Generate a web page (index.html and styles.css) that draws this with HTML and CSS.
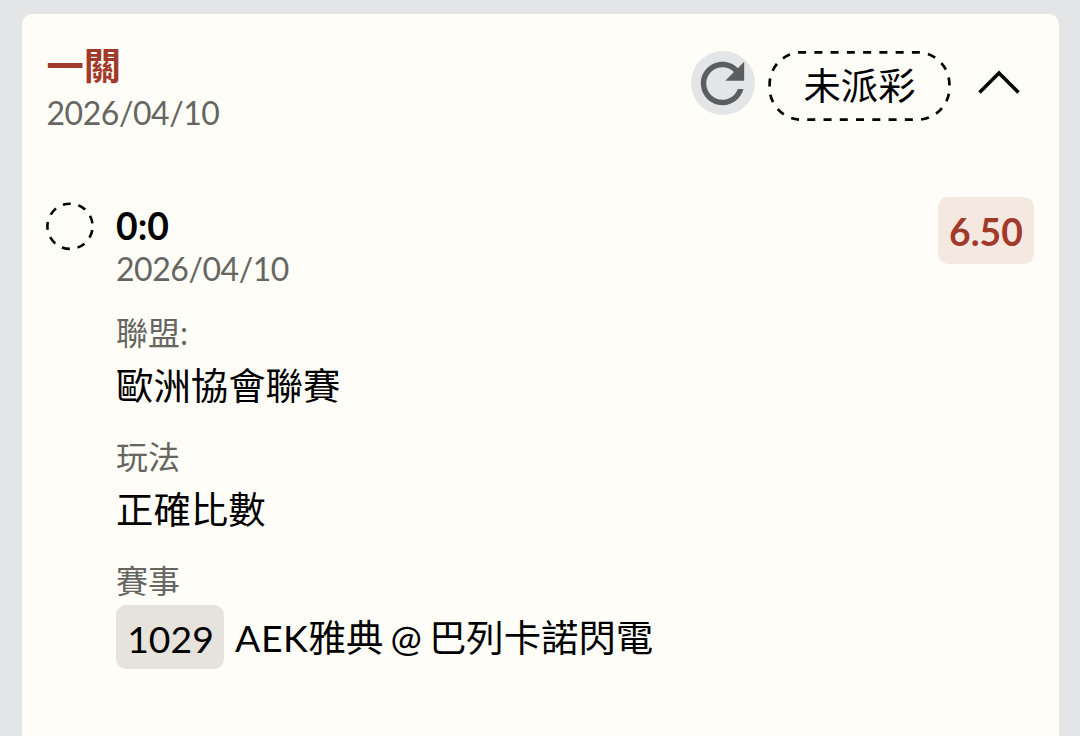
FILE: index.html
```html
<!DOCTYPE html>
<html lang="zh-Hant">

<head>
	<meta charset="UTF-8">
	<meta name="viewport" content="width=device-width, initial-scale=1.0">
	<title>投注紀錄</title>
	<link rel="stylesheet" href="styles.css">
</head>

<body>
	<div class="card">
		<div class="card-header">
			<div class="header-info">
				<h1 class="title">一關</h1>
				<div class="date">2026/04/10</div>
			</div>
			<button class="btn-refresh" aria-label="重新整理">
				<svg viewBox="0 0 24 24" width="65" height="65">
					<path fill="#5c5d5f" d="M17.65 6.35C16.2 4.9 14.21 4 12 4c-4.42 0-7.99 3.58-7.99 8s3.57 8 7.99 8c3.73 0 6.84-2.55 7.73-6h-2.08c-.82 2.33-3.04 4-5.65 4-3.31 0-6-2.69-6-6s2.69-6 6-6c1.66 0 3.14.69 4.22 1.78L13 11h7V4l-2.35 2.35z"/>
				</svg>
			</button>
			<div class="status">
				<svg class="status-border" viewBox="0 0 183 70">
					<rect x="1.6" y="1.3" width="179.8" height="67.4" rx="32"/>
				</svg>
				<span class="status-text">未派彩</span>
			</div>
			<button class="btn-toggle" aria-label="收合">
				<svg viewBox="0 0 48 32" width="48" height="32">
					<path d="M4.500 26.500 24 7l19.500 19.500"/>
				</svg>
			</button>
		</div>

		<div class="bet">
			<svg class="bet-mark" viewBox="0 0 50 50">
				<circle cx="25" cy="25.3" r="22.6"/>
			</svg>
			<div class="bet-info">
				<div class="score">0:0</div>
				<div class="date">2026/04/10</div>
				<div class="group">
					<div class="label">聯盟:</div>
					<div class="value">歐洲協會聯賽</div>
				</div>
				<div class="group">
					<div class="label">玩法</div>
					<div class="value">正確比數</div>
				</div>
				<div class="group">
					<div class="label">賽事</div>
					<div class="match">
						<span class="match-no">1029</span>
						<span class="value"><span class="team-en">AEK</span>雅典 @ 巴列卡諾閃電</span>
					</div>
				</div>
			</div>
			<div class="odds">6.50</div>
		</div>
	</div>
</body>

</html>
```
FILE: styles.css
```css
* {
	box-sizing: border-box;
}

body {
	margin: 0;
	padding: 14px 21.5px 0;
	height: 736px;
	background-color: #e4e5e7;
	font-family: Lato, "Noto Sans CJK TC", sans-serif;
	color: #000;
}

.card {
	height: 722px;
	padding: 28px 24.5px 0 25px;
	border-radius: 10px 10px 0 0;
	background-color: #fffdf7;
}

.card-header {
	display: flex;
	align-items: flex-start;
}

.header-info {
	flex: 1;
}

.title {
	margin: 0 0 1px;
	font-size: 37.3px;
	font-weight: 700;
	line-height: 48px;
	color: #a23a2b;
}

.date {
	font-size: 32px;
	line-height: 44px;
	letter-spacing: -0.45px;
	color: #666561;
}

.btn-refresh {
	display: flex;
	align-items: center;
	justify-content: center;
	width: 64px;
	height: 64px;
	margin-top: 9px;
	padding: 0;
	border: none;
	border-radius: 50%;
	background-color: #e4e5e7;
	cursor: pointer;
}

.btn-refresh svg {
	flex: none;
	margin-left: -1px;
}

.status {
	position: relative;
	width: 183px;
	height: 70px;
	margin: 9px 0 0 13px;
	font-size: 37.3px;
	line-height: 70px;
	text-align: center;
}

/* 虛線外框 */
.status-border {
	position: absolute;
	top: 0;
	left: 0;
	width: 183px;
	height: 70px;
}

.status-border rect {
	fill: none;
	stroke: #000;
	stroke-width: 2.7;
	stroke-dasharray: 8 8.26;
	stroke-dashoffset: 3.5;
}

.btn-toggle {
	margin: 24px 11px 0 24px;
	padding: 0;
	border: none;
	background: none;
	cursor: pointer;
}

.btn-toggle svg {
	display: block;
}

.btn-toggle path {
	fill: none;
	stroke: #000;
	stroke-width: 3.6;
}

.bet {
	display: flex;
	align-items: flex-start;
	margin-top: 62px;
}

.bet-mark {
	flex: none;
	width: 50px;
	height: 50px;
	margin: 4px 21.5px 0 -2px;
}

.bet-mark circle {
	fill: none;
	stroke: #000;
	stroke-width: 2.6;
	stroke-dasharray: 8 7.78;
	stroke-dashoffset: -3.9;
}

.bet-info {
	flex: 1;
	padding-top: 4px;
}

.score {
	font-size: 37.3px;
	font-weight: 700;
	line-height: 50px;
}

.bet-info .date {
	margin: -2px 0 20px;
	line-height: 40px;
}

.group {
	margin-bottom: 19px;
}

.label {
	font-size: 32px;
	line-height: 48px;
	color: #666561;
}

.value {
	padding-top: 1px;
	font-size: 37.4px;
	line-height: 56px;
}

.match {
	display: flex;
	align-items: center;
}

.match .value {
	font-kerning: none;
	word-spacing: -2.4px;
}

.team-en {
	letter-spacing: 0.6px;
}

.match-no {
	width: 108px;
	height: 64px;
	margin-right: 11px;
	padding-left: 1px;
	border-radius: 10px;
	background-color: #e6e2dc;
	font-size: 37.3px;
	line-height: 67px;
	text-align: center;
}

.odds {
	width: 96px;
	height: 67px;
	border-radius: 10px;
	background-color: #f5e8e1;
	font-size: 37.3px;
	font-weight: 700;
	line-height: 69px;
	text-align: center;
	color: #a23a2b;
}
```
